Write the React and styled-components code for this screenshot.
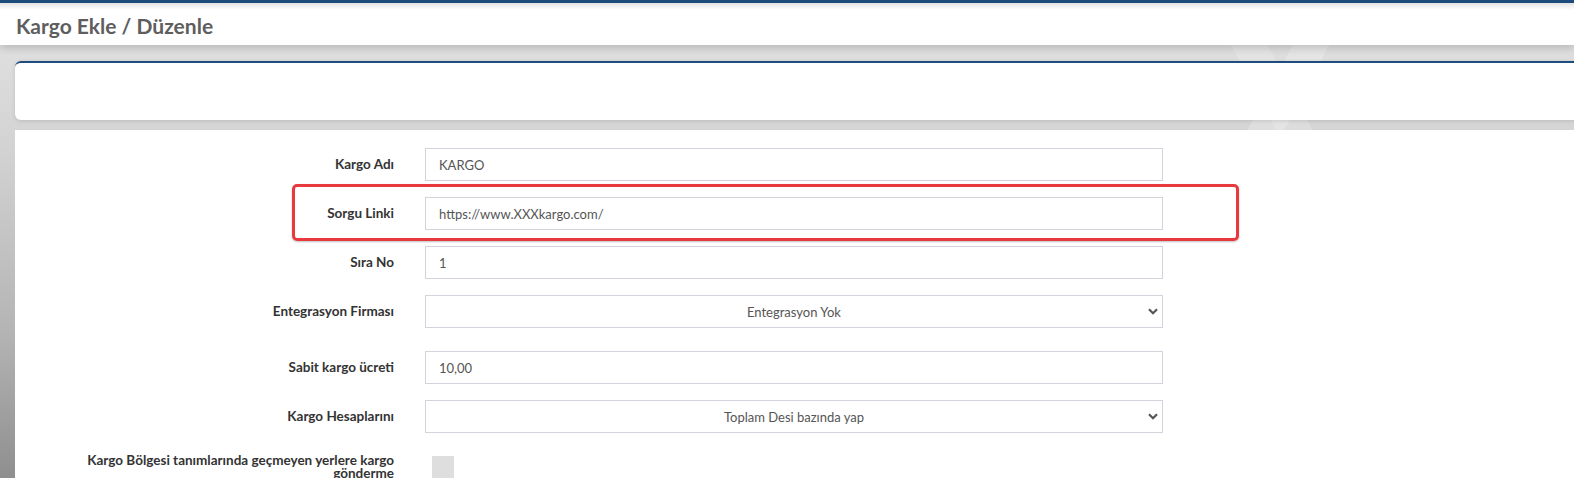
import styled, { createGlobalStyle } from "styled-components";

const GlobalStyle = createGlobalStyle`
  html, body {
    margin: 0;
    padding: 0;
    height: 100%;
    overflow: hidden;
  }
  body {
    font-family: Lato, "Open Sans", "Liberation Sans", sans-serif;
    background: #d6d6d6;
  }
`;

const fields = [
  { label: "Kargo Adı", type: "text", value: "KARGO" },
  { label: "Sorgu Linki", type: "text", value: "https://www.XXXkargo.com/", highlight: true },
  { label: "Sıra No", type: "text", value: "1" },
  { label: "Entegrasyon Firması", type: "select", value: "Entegrasyon Yok", space: 23 },
  { label: "Sabit kargo ücreti", type: "text", value: "10,00" },
  { label: "Kargo Hesaplarını", type: "select", value: "Toplam Desi bazında yap", space: 20 },
];

function Chevron() {
  return (
    <ChevronIcon viewBox="0 0 10 7" width="10" height="7">
      <path d="M1 1.2 L5 5.2 L9 1.2" fill="none" stroke="#555" strokeWidth="2.2" />
    </ChevronIcon>
  );
}

export default function App() {
  return (
    <Page>
      <GlobalStyle />
      <Header>
        <Title>Kargo Ekle / Düzenle</Title>
      </Header>

      <Body>
        <TopCard />

        <FormCard>
          {fields.map((f) => (
            <Row key={f.label} $highlight={f.highlight} $space={f.space}>
              <Label>{f.label}</Label>
              {f.type === "select" ? (
                <SelectWrap>
                  <Select defaultValue={f.value}>
                    <option>{f.value}</option>
                  </Select>
                  <Chevron />
                </SelectWrap>
              ) : (
                <Input defaultValue={f.value} />
              )}
            </Row>
          ))}

          <Row $last>
            <Label $wrap>Kargo Bölgesi tanımlarında geçmeyen yerlere kargo gönderme</Label>
            <Toggle />
          </Row>
        </FormCard>
      </Body>
    </Page>
  );
}

/* ================= STYLED COMPONENTS ================= */

const Page = styled.div`
  width: 1574px;
  height: 478px;
  overflow: hidden;
  display: flex;
  flex-direction: column;
  border-top: 3px solid #1c4b7b;
  box-sizing: border-box;
  background:
    linear-gradient(118deg, transparent 0 72%, rgba(255, 255, 255, 0.22) 72% 74%, transparent 74%),
    linear-gradient(62deg, transparent 0 80%, rgba(255, 255, 255, 0.18) 80% 82%, transparent 82%),
    linear-gradient(to bottom, #e4e4e4 0, #d2d2d2 150px, #b4b4b4 330px, #8e8e8e 478px);
`;

const Header = styled.div`
  height: 42px;
  flex-shrink: 0;
  background: linear-gradient(to bottom, #e2e2e2 0, #ffffff 7px, #ffffff 100%);
  box-shadow: 0 3px 8px rgba(0, 0, 0, 0.18);
  display: flex;
  align-items: center;
  padding-left: 16px;
  position: relative;
  z-index: 1;
`;

const Title = styled.h1`
  margin: 2px 0 0;
  font-size: 21px;
  font-weight: 700;
  color: #5e5e5e;
  letter-spacing: 0;
`;

const Body = styled.div`
  flex: 1;
  display: flex;
  flex-direction: column;
  gap: 10px;
  padding: 16px 0 0 15px;
  margin-right: -20px;
`;

const TopCard = styled.div`
  height: 57px;
  flex-shrink: 0;
  background: #fff;
  border-top: 2px solid #1d4c7d;
  border-radius: 6px;
  box-shadow: 0 1px 4px rgba(0, 0, 0, 0.12);
`;

const FormCard = styled.div`
  flex: 1;
  background: #fff;
  padding-top: 18px;
  display: flex;
  flex-direction: column;
`;

const Row = styled.div`
  position: relative;
  display: grid;
  grid-template-columns: 379px 738px;
  column-gap: 31px;
  align-items: center;
  margin-bottom: ${(p) => (p.$last ? 0 : p.$space || 16)}px;

  ${(p) =>
    p.$highlight &&
    `
    &::after {
      content: "";
      position: absolute;
      left: 277px;
      top: -13px;
      width: 947px;
      height: 57px;
      box-sizing: border-box;
      border: 3px solid #e8393e;
      border-radius: 5px;
      box-shadow: 0 1px 2px rgba(0, 0, 0, 0.25);
      pointer-events: none;
    }
  `}
`;

const Label = styled.label`
  font-size: 13.5px;
  font-weight: 700;
  color: #333;
  text-align: right;
  line-height: 13px;
  padding-left: ${(p) => (p.$wrap ? "60px" : "0")};
  align-self: ${(p) => (p.$wrap ? "start" : "center")};
  margin-top: ${(p) => (p.$wrap ? "1px" : "0")};
`;

const Input = styled.input`
  width: 100%;
  height: 33px;
  box-sizing: border-box;
  border: 1px solid #d3d3dc;
  padding: 0 13px;
  font-family: inherit;
  font-size: 13px;
  color: #555;
  outline: none;
`;

const SelectWrap = styled.div`
  position: relative;
  display: flex;
`;

const Select = styled.select`
  flex: 1;
  height: 33px;
  box-sizing: border-box;
  border: 1px solid #d3d3dc;
  background: #fff;
  border-radius: 0;
  appearance: none;
  font-family: inherit;
  font-size: 13px;
  color: #555;
  text-align: center;
  text-align-last: center;
  outline: none;
`;

const ChevronIcon = styled.svg`
  position: absolute;
  right: 5px;
  top: 13px;
  pointer-events: none;
`;

const Toggle = styled.div`
  width: 22px;
  height: 30px;
  margin: 3px 0 0 7px;
  background: #dedede;
`;
